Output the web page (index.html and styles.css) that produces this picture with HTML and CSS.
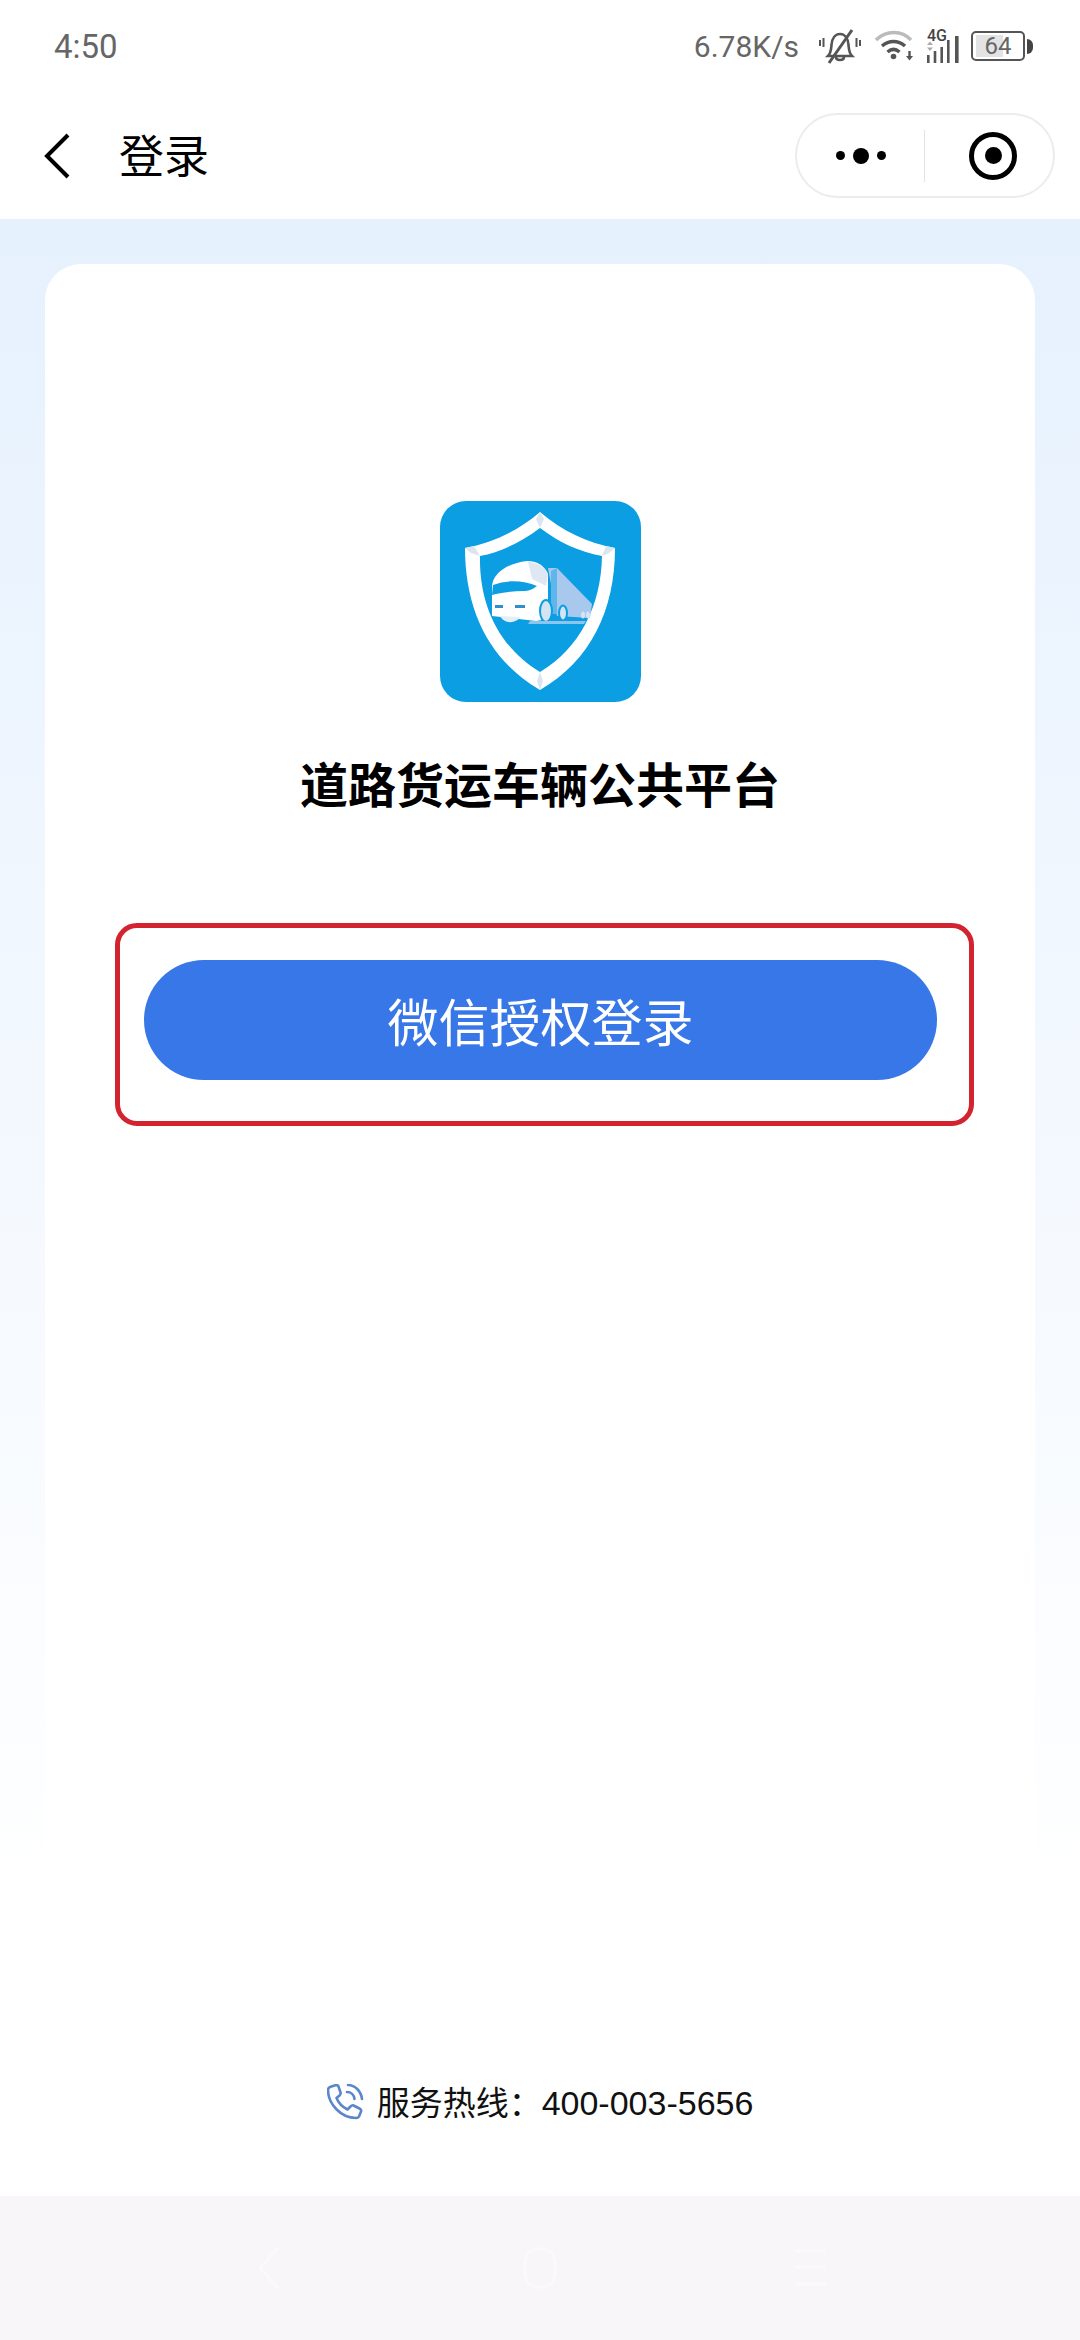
FILE: index.html
```html
<!DOCTYPE html>
<html lang="zh-CN">
<head>
	<meta charset="UTF-8">
	<meta name="viewport" content="width=device-width, initial-scale=1.0">
	<title>登录</title>
	<link rel="stylesheet" href="styles.css">
</head>
<body>
	<div class="page">
		<div class="status">
			<span class="time">4:50</span>
			<div class="status-right">
				<span class="speed">6.78K/s</span>
				<svg class="ic-bell" width="42" height="36" viewBox="0 0 42 36" fill="none" stroke="#555" stroke-width="2.6">
					<path d="M9 28c3-3 3-6 3.500-11 .5-7 4-11 8.500-11s8 4 8.500 11c.5 5 .5 8 3.500 11z"/>
					<path d="M17 29c0 4 8 4 8 0"/>
					<path d="M33 2 10 35" stroke-width="3"/>
					<path d="M1 12v6M4.500 10v9M37.500 10v9M41 12v6" stroke-width="2"/>
				</svg>
				<svg class="ic-wifi" width="40" height="32" viewBox="0 0 40 32" fill="none">
					<path d="M1 10c10-10 26-10 35 0" stroke="#bbb" stroke-width="3.400"/>
					<path d="M7 16c7-6 16-6 23 0M12.500 22c4-3.500 8-3.500 12 0" stroke="#555" stroke-width="3.400"/>
					<circle cx="18.500" cy="26.500" r="2.800" fill="#555"/>
					<path d="M34.500 21v6" stroke="#555" stroke-width="2.400"/>
					<path d="M31 26h7l-3.500 4.500z" fill="#555"/>
				</svg>
				<div class="net">
					<span class="net-label">4G</span>
					<svg width="32" height="33" viewBox="0 0 32 33">
						<path d="M0 15h6l-3-3.500zM0 17.500h6l-3 3.500z" fill="#aaa"/>
						<rect x="0" y="25" width="2.600" height="8" fill="#555"/>
						<rect x="6.700" y="21" width="2.600" height="12" fill="#555"/>
						<rect x="13.400" y="17" width="2.600" height="16" fill="#555"/>
						<rect x="20" y="10" width="2.600" height="23" fill="#555"/>
						<rect x="28" y="6" width="3.600" height="27" fill="#555"/>
					</svg>
				</div>
				<div class="battery"><span class="battery-num">64</span></div>
				<span class="battery-tip"></span>
			</div>
		</div>

		<div class="nav">
			<svg class="back" width="26" height="46" viewBox="0 0 26 46" fill="none" stroke="#000" stroke-width="4">
				<path d="M24 2 3 23l21 21"/>
			</svg>
			<span class="nav-title">登录</span>
			<div class="capsule">
				<div class="capsule-more">
					<i class="dot"></i><i class="dot dot-big"></i><i class="dot"></i>
				</div>
				<span class="capsule-line"></span>
				<div class="capsule-target"><i></i></div>
			</div>
		</div>

		<div class="main">
			<div class="card">
				<svg class="logo" width="201" height="201" viewBox="0 0 201 201">
					<rect width="201" height="201" rx="26" fill="#0b9ee3"/>
					<path d="M100 11C122 30 148 42 175 47 175 110 150 160 100 189 50 160 25 110 25 47 52 42 78 30 100 11Z" fill="#fff"/>
					<path d="M100 27C120 42 140 51 162 55 161 105 140 147 100 171 60 147 39 105 40 55 60 51 80 42 100 27Z" fill="#0b9ee3"/>
					<path d="M100 11 96 18 100 27 104 18ZM25 47 34 45 40 55 31 52ZM175 47 166 45 162 55 169 52ZM100 189 97 180 100 171 103 180Z" fill="#dbe5f0"/>
					<path d="M108 67H117L152 103 150 117 117 115Z" fill="#a8c8ee"/>
					<path d="M111 70 117 67V113H111Z" fill="#5fb6ea"/>
					<path d="M52 85C53 72 68 62 87 60 97 60 104 64 108 73V118L96 120 52 115Z" fill="#fff"/>
					<path d="M53 84C68 78 85 80 97 85 92 89 88 90 84 90 72 90 60 92 52 94Z" fill="#0b9ee3"/>
					<path d="M88 61C96 61 104 65 108 73L106 85 92 78Z" fill="#dfe8f2"/>
					<rect x="55" y="104" width="8" height="3" fill="#2f8ecb"/>
					<rect x="75" y="104" width="10" height="3" fill="#2f8ecb"/>
					<path d="M60 115C64 123 76 123 80 116Z" fill="#e4eef7"/>
					<ellipse cx="106" cy="110" rx="6" ry="11" fill="#d5e4f2" stroke="#0b9ee3" stroke-width="2"/>
					<ellipse cx="123" cy="112" rx="4" ry="7.500" fill="#d5e4f2" stroke="#0b9ee3" stroke-width="2"/>
					<path d="M90 120H146L144 123H88Z" fill="#8ec5ee"/>
					<ellipse cx="143" cy="114" rx="2" ry="3.500" fill="#d5e4f2"/>
					<ellipse cx="148" cy="114" rx="2" ry="3.500" fill="#d5e4f2"/>
				</svg>
				<h1 class="app-name">道路货运车辆公共平台</h1>
				<div class="mark">
					<button class="login-btn" type="button">微信授权登录</button>
				</div>
				<div class="hotline">
					<svg class="ic-phone" width="37" height="36" viewBox="0 0 37 36" fill="none" stroke="#5b86cc" stroke-width="2.600" stroke-linejoin="round" stroke-linecap="round">
						<path d="M3 3 9 1c1 0 2 0 2.500 1.500l2 6c.5 1.500 0 2-1 3l-3 2.500c2 5 6 9 11 11.500l3-3c1-1 2-1.500 3-1l6 3c1 .5 2 1.500 1.500 3l-2 5c-.5 1-1.500 1.500-3 1.500C14 34 1 20 1 6c0-1.500.5-2.500 2-3Z"/>
						<path d="M20 8c4 0 7 3 7.500 7M21 1c7 0 13 6 14 14"/>
					</svg>
					<span class="hotline-text">服务热线：<span class="hotline-num">400-003-5656</span></span>
				</div>
			</div>
		</div>

		<div class="softkeys">
			<svg width="30" height="44" viewBox="0 0 30 44" fill="none" stroke="#faf9fb" stroke-width="3"><path d="M24 2 6 22l18 20"/></svg>
			<svg width="36" height="44" viewBox="0 0 36 44" fill="none" stroke="#faf9fb" stroke-width="3"><rect x="3" y="3" width="30" height="38" rx="13"/></svg>
			<svg width="30" height="44" viewBox="0 0 30 44" fill="none" stroke="#faf9fb" stroke-width="3"><path d="M0 5h30M0 21h30M0 38h30"/></svg>
		</div>
	</div>
</body>
</html>
```

FILE: styles.css
```css
* {
	box-sizing: border-box;
}
html, body {
	margin: 0;
	padding: 0;
}
body {
	font-family: "Noto Sans CJK SC", "Liberation Sans", sans-serif;
	background: #fff;
}
.page {
	width: 1080px;
	height: 2340px;
	display: flex;
	flex-direction: column;
}

/* status bar */
.status {
	height: 92px;
	flex: none;
	display: flex;
	justify-content: space-between;
	align-items: center;
	padding: 0 47px 0 54px;
	color: #666;
	font-family: Roboto, sans-serif;
	font-size: 30px;
}
.time {
	font-size: 33px;
}
.status-right {
	display: flex;
	align-items: center;
}
.speed {
	margin-right: 20px;
}
.ic-bell {
	margin-right: 14px;
}
.ic-wifi {
	margin-right: 12px;
}
.net {
	position: relative;
	margin-right: 12px;
	height: 33px;
}
.net-label {
	position: absolute;
	left: 0;
	top: -1px;
	font-size: 16px;
	font-weight: 500;
	line-height: 14px;
	color: #444;
}
.battery {
	width: 54px;
	height: 30px;
	border: 2px solid #555;
	border-radius: 5px;
	padding: 2px 3px;
	background: linear-gradient(to right, #e3e3e6 62%, #fff 62%) content-box;
	display: flex;
	align-items: center;
	justify-content: center;
}
.battery-num {
	font-size: 24px;
	line-height: 24px;
	color: #666;
}
.battery-tip {
	width: 6px;
	height: 15px;
	margin-left: 2px;
	background: #444;
	border-radius: 0 6px 6px 0;
}

/* title bar */
.nav {
	height: 127px;
	flex: none;
	display: flex;
	align-items: center;
	padding: 0 25px 0 44px;
}
.back {
	margin-right: 49px;
}
.nav-title {
	font-size: 45px;
	line-height: 60px;
	margin-top: -4px;
	color: #000;
	flex: 1;
}
.capsule {
	width: 260px;
	height: 85px;
	border: 2px solid #ececec;
	border-radius: 43px;
	display: flex;
	align-items: center;
}
.capsule-more {
	width: 127px;
	display: flex;
	justify-content: center;
	align-items: center;
	gap: 8px;
}
.dot {
	width: 9px;
	height: 9px;
	border-radius: 50%;
	background: #000;
}
.dot-big {
	width: 16px;
	height: 16px;
}
.capsule-line {
	width: 1px;
	height: 52px;
	background: #e2e2e2;
}
.capsule-target {
	width: 48px;
	height: 48px;
	margin-left: 44px;
	border: 5px solid #000;
	border-radius: 50%;
	display: flex;
	align-items: center;
	justify-content: center;
}
.capsule-target i {
	width: 17px;
	height: 17px;
	border-radius: 50%;
	background: #000;
}

/* content */
.main {
	flex: 1;
	display: flex;
	padding: 45px 45px 0;
	background: linear-gradient(to bottom, #e6f1fe 0%, #ffffff 86%);
}
.card {
	flex: 1;
	display: flex;
	flex-direction: column;
	background: #fff;
	border-radius: 36px 36px 0 0;
	padding-top: 237px;
}
.logo {
	display: block;
	margin: 0 auto;
}
.app-name {
	margin: 45px 0 0;
	text-align: center;
	font-size: 48px;
	line-height: 70px;
	font-weight: 700;
	color: #000;
}
.mark {
	width: 859px;
	margin: 106px 0 0 70px;
	padding: 32px 32px 41px 24px;
	border: 5px solid #d2232f;
	border-radius: 22px;
}
.login-btn {
	display: block;
	width: 100%;
	height: 120px;
	border: none;
	border-radius: 60px;
	background: #3777e8;
	color: #fff;
	font-family: inherit;
	font-size: 51px;
	font-weight: 400;
}
.hotline {
	margin-top: auto;
	margin-bottom: 69px;
	display: flex;
	align-items: center;
	justify-content: center;
	gap: 13px;
}
.hotline-text {
	font-size: 33px;
	line-height: 48px;
	color: #111;
}
.hotline-num {
	font-family: "Liberation Sans", sans-serif;
	font-size: 34px;
}

/* android keys, almost invisible */
.softkeys {
	height: 144px;
	flex: none;
	background: #f8f6f9;
	display: flex;
	align-items: center;
	justify-content: space-between;
	padding: 0 254px;
}
```
